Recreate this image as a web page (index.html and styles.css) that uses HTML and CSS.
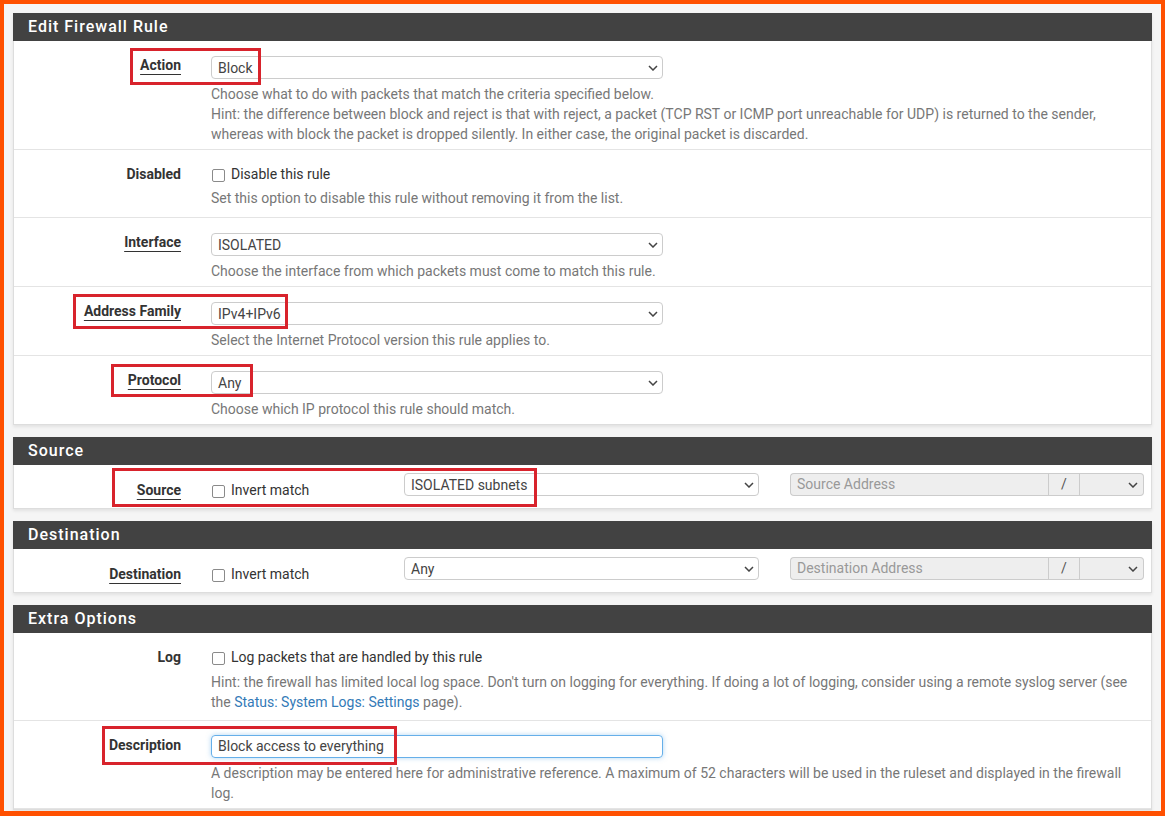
FILE: index.html
```html
<!DOCTYPE html>
<html>
<head>
    <title>Firewall: Rules: Edit</title>
    <link rel="stylesheet" href="styles.css">
</head>
<body>
    <div class="frame">

        <div class="panel">
            <div class="panel-heading">Edit Firewall Rule</div>

            <div class="form-row">
                <div class="label"><span class="req">Action</span></div>
                <div class="field">
                    <div class="select wide"><span>Block</span><svg width="10" height="6" viewBox="0 0 10 6"><path d="M1 1l4 4 4-4" fill="none" stroke="#444" stroke-width="1.5"/></svg></div>
                    <div class="help">Choose what to do with packets that match the criteria specified below.<br>Hint: the difference between block and reject is that with reject, a packet (TCP RST or ICMP port unreachable for UDP) is returned to the sender, whereas with block the packet is dropped silently. In either case, the original packet is discarded.</div>
                </div>
            </div>

            <div class="form-row check-row">
                <div class="label">Disabled</div>
                <div class="field">
                    <div class="check"><span class="box"></span>Disable this rule</div>
                    <div class="help">Set this option to disable this rule without removing it from the list.</div>
                </div>
            </div>

            <div class="form-row">
                <div class="label"><span class="req">Interface</span></div>
                <div class="field">
                    <div class="select wide"><span>ISOLATED</span><svg width="10" height="6" viewBox="0 0 10 6"><path d="M1 1l4 4 4-4" fill="none" stroke="#444" stroke-width="1.5"/></svg></div>
                    <div class="help">Choose the interface from which packets must come to match this rule.</div>
                </div>
            </div>

            <div class="form-row">
                <div class="label"><span class="req">Address Family</span></div>
                <div class="field">
                    <div class="select wide"><span>IPv4+IPv6</span><svg width="10" height="6" viewBox="0 0 10 6"><path d="M1 1l4 4 4-4" fill="none" stroke="#444" stroke-width="1.5"/></svg></div>
                    <div class="help">Select the Internet Protocol version this rule applies to.</div>
                </div>
            </div>

            <div class="form-row last">
                <div class="label"><span class="req">Protocol</span></div>
                <div class="field">
                    <div class="select wide"><span>Any</span><svg width="10" height="6" viewBox="0 0 10 6"><path d="M1 1l4 4 4-4" fill="none" stroke="#444" stroke-width="1.5"/></svg></div>
                    <div class="help">Choose which IP protocol this rule should match.</div>
                </div>
            </div>
        </div>

        <div class="panel">
            <div class="panel-heading">Source</div>
            <div class="addr-row">
                <div class="label"><span class="req">Source</span></div>
                <div class="cell"><div class="check"><span class="box"></span>Invert match</div></div>
                <div class="cell">
                    <div class="select"><span>ISOLATED subnets</span><svg width="10" height="6" viewBox="0 0 10 6"><path d="M1 1l4 4 4-4" fill="none" stroke="#444" stroke-width="1.5"/></svg></div>
                </div>
                <div class="cell last-cell">
                    <div class="input-group">
                        <div class="addr-input">Source Address</div>
                        <div class="addon">/</div>
                        <div class="mask"><svg width="10" height="6" viewBox="0 0 10 6"><path d="M1 1l4 4 4-4" fill="none" stroke="#444" stroke-width="1.5"/></svg></div>
                    </div>
                </div>
            </div>
        </div>

        <div class="panel">
            <div class="panel-heading">Destination</div>
            <div class="addr-row">
                <div class="label"><span class="req">Destination</span></div>
                <div class="cell"><div class="check"><span class="box"></span>Invert match</div></div>
                <div class="cell">
                    <div class="select"><span>Any</span><svg width="10" height="6" viewBox="0 0 10 6"><path d="M1 1l4 4 4-4" fill="none" stroke="#444" stroke-width="1.5"/></svg></div>
                </div>
                <div class="cell last-cell">
                    <div class="input-group">
                        <div class="addr-input">Destination Address</div>
                        <div class="addon">/</div>
                        <div class="mask"><svg width="10" height="6" viewBox="0 0 10 6"><path d="M1 1l4 4 4-4" fill="none" stroke="#444" stroke-width="1.5"/></svg></div>
                    </div>
                </div>
            </div>
        </div>

        <div class="panel">
            <div class="panel-heading">Extra Options</div>

            <div class="form-row check-row log-row">
                <div class="label">Log</div>
                <div class="field">
                    <div class="check"><span class="box"></span>Log packets that are handled by this rule</div>
                    <div class="help">Hint: the firewall has limited local log space. Don't turn on logging for everything. If doing a lot of logging, consider using a remote syslog server (see the <a href="#">Status: System Logs: Settings</a> page).</div>
                </div>
            </div>

            <div class="form-row desc-row">
                <div class="label">Description</div>
                <div class="field">
                    <div class="text-input">Block access to everything</div>
                    <div class="help">A description may be entered here for administrative reference. A maximum of 52 characters will be used in the ruleset and displayed in the firewall log.</div>
                </div>
            </div>
        </div>

        <!-- red callouts drawn over the form -->
        <div class="callout c-action"></div>
        <div class="callout c-family"></div>
        <div class="callout c-proto"></div>
        <div class="callout c-source"></div>
        <div class="callout c-desc"></div>
    </div>
</body>
</html>
```

FILE: styles.css
```css
body { margin: 0; background: #ff5000; font-family: Roboto, "Liberation Sans", sans-serif; font-size: 14px; color: #333; overflow: hidden; }
.frame { position: relative; margin: 4px; height: 807px; padding: 9px; box-sizing: border-box; background: #f5f5f5; overflow: hidden; }

.panel { background: #fff; border: 1px solid #ddd; border-top: none; margin-bottom: 12px; box-shadow: 0 2px 3px rgba(0,0,0,0.08); }
.panel-heading { height: 28px; padding: 0 15px; line-height: 28px; background: #424242; color: #fff; margin: 0 -1px; font-size: 16px; font-weight: 500; letter-spacing: 1px; }

.form-row { display: grid; grid-template-columns: 182px 1fr; padding: 15px 0 5px; border-bottom: 1px solid #e4e4e4; }
.form-row.last { border-bottom: none; }
.form-row .label { margin-top: -1px; }
.check-row { padding: 14px 0 9px; }
.check-row .label { margin-top: 0; }
.log-row { padding-bottom: 8px; }
.desc-row { padding: 14px 0 5px; }
.desc-row .label { margin-top: 0; }

.label { text-align: right; padding-right: 15px; font-weight: 700; line-height: 20px; }
.req { text-decoration: underline; text-underline-offset: 4px; text-decoration-thickness: 1px; }
.field { padding: 0 14px 0 15px; }

.select { height: 23px; box-sizing: border-box; border: 1px solid #ccc; border-radius: 4px; background: #fff; display: flex; align-items: center; justify-content: space-between; padding: 0 4px 0 6px; color: #444; }
.select.wide { width: 452px; }
.select svg { flex: none; }

.help { margin-top: 5px; line-height: 20px; color: #777; }
.check-row .help { margin-top: 4px; }
.log-row .help { margin-top: 5px; }
.help a { color: #337ab7; text-decoration: none; }

.check { display: flex; align-items: center; line-height: 20px; color: #333; }
.box { width: 13px; height: 13px; box-sizing: border-box; border: 1.5px solid #8a8a8a; border-radius: 2px; margin: 2px 6px 0 1px; background: #fff; }

.text-input { width: 452px; height: 23px; box-sizing: border-box; border: 1px solid #66afe9; border-radius: 4px; box-shadow: 0 0 5px rgba(102,175,233,0.5); padding: 0 6px; line-height: 21px; color: #444; }

/* source / destination rows */
.addr-row { display: grid; grid-template-columns: 182px 193px 385px 1fr; padding: 8px 0; }
.addr-row .label { padding-top: 7px; }
.cell { padding: 0 15px; }
.addr-row .check { margin-top: 7px; }
.last-cell { padding: 0 7px 0 16px; }

.input-group { display: flex; height: 23px; }
.addr-input { flex: 1; box-sizing: border-box; border: 1px solid #ccc; border-right: none; border-radius: 4px 0 0 4px; background: #eee; color: #999; padding: 0 6px; line-height: 21px; }
.addon { width: 32px; box-sizing: border-box; border: 1px solid #ccc; background: #eee; color: #555; text-align: center; line-height: 21px; }
.mask { width: 64px; box-sizing: border-box; border: 1px solid #ccc; border-left: none; border-radius: 0 4px 4px 0; background: #eee; display: flex; align-items: center; justify-content: flex-end; padding-right: 5px; }

.callout { position: absolute; box-sizing: border-box; border: 3px solid #d8232c; }
.c-action { left: 126px; top: 44px; width: 131px; height: 37px; }
.c-family { left: 69px; top: 290px; width: 215px; height: 35px; }
.c-proto { left: 107px; top: 360px; width: 142px; height: 33px; }
.c-source { left: 108px; top: 464px; width: 425px; height: 39px; }
.c-desc { left: 98px; top: 722px; width: 295px; height: 39px; }
```
